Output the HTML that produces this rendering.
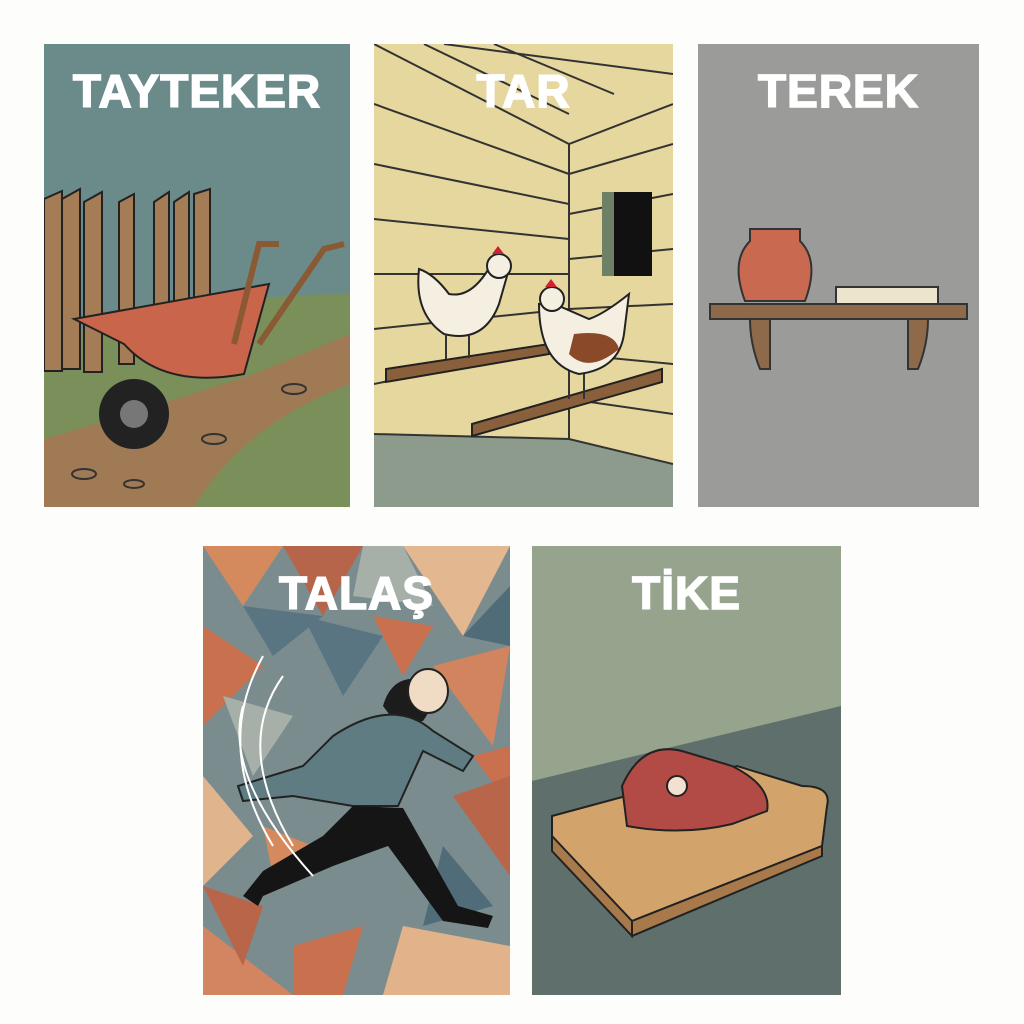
<!DOCTYPE html>
<html><head><meta charset="utf-8"><style>
body{margin:0;width:1024px;height:1024px;background:#fdfdfc;position:relative;overflow:hidden;font-family:"Liberation Sans","DejaVu Sans",sans-serif}
.c{position:absolute;overflow:hidden}
.t{position:absolute;left:0;right:0;text-align:center;color:#fff;font-weight:900;font-size:46px;letter-spacing:1px;-webkit-text-stroke:1.5px #fff}
svg{position:absolute;left:0;top:0}
</style></head><body>

<div class="c" style="left:44px;top:44px;width:306px;height:463px;background:#6b8a8a">
<svg width="306" height="463">
<path d="M0 300 Q150 250 306 250 L306 463 L0 463Z" fill="#7b8f5a"/>
<path d="M0 395 Q120 360 210 330 Q260 310 306 290 L306 340 Q200 380 150 463 L0 463Z" fill="#a07a55"/>
<g fill="#a47c55" stroke="#222" stroke-width="2">
<path d="M0 155 l18 -8 v180 h-18z"/><path d="M18 155 l18 -10 v180 h-18z"/><path d="M40 158 l18 -10 v180 h-18z"/><path d="M75 158 l15 -8 v170 h-15z"/><path d="M110 158 l15 -10 v150 h-15z"/><path d="M130 158 l15 -10 v140 h-15z"/><path d="M150 150 l16 -5 v150 h-16z"/>
</g>
<path d="M30 275 L225 240 L200 330 Q120 345 80 300Z" fill="#c8654a" stroke="#222" stroke-width="2"/>
<circle cx="90" cy="370" r="35" fill="#222"/><circle cx="90" cy="370" r="14" fill="#777"/>
<path d="M190 300 L215 200 L235 200 M215 300 L280 205 L300 200" stroke="#8a5a35" stroke-width="6" fill="none"/>
<g fill="none" stroke="#333" stroke-width="2"><ellipse cx="40" cy="430" rx="12" ry="5"/><ellipse cx="90" cy="440" rx="10" ry="4"/><ellipse cx="170" cy="395" rx="12" ry="5"/><ellipse cx="250" cy="345" rx="12" ry="5"/></g>
</svg>
<div class="t" style="top:20px">TAYTEKER</div></div>

<div class="c" style="left:374px;top:44px;width:299px;height:463px;background:#e6d79f">
<svg width="299" height="463">
<path d="M0 390 L195 395 L299 420 L299 463 L0 463Z" fill="#8d9b8c"/>
<g stroke="#333" stroke-width="2" fill="none">
<path d="M0 0 L195 100 L299 60 M195 100 V395 M0 390 L195 395 L299 420"/>
<path d="M0 60 L195 130 M0 120 L195 160 M0 175 L195 195 M0 230 L195 230 M0 285 L195 265 M0 340 L195 300 M195 130 L299 100 M195 170 L299 150 M195 215 L299 205 M195 265 L299 260 M195 310 L299 320 M195 355 L299 370 M50 0 L195 70 M120 0 L240 50 M70 0 L299 30"/>
</g>
<rect x="228" y="148" width="50" height="84" fill="#111"/><rect x="228" y="148" width="12" height="84" fill="#6e8066"/>
<path d="M12 325 L175 300 L175 310 L12 338Z" fill="#8a5f3c" stroke="#222" stroke-width="2"/>
<path d="M98 380 L288 325 L288 338 L98 392Z" fill="#8a5f3c" stroke="#222" stroke-width="2"/>
<path d="M45 225 Q40 270 70 290 Q110 300 125 260 L135 225 L120 215 Q100 255 75 250 Q60 230 45 225Z" fill="#f5efe2" stroke="#222" stroke-width="2"/>
<circle cx="125" cy="222" r="12" fill="#f5efe2" stroke="#222" stroke-width="2"/><path d="M118 210 l6 -8 l6 8z" fill="#c23"/>
<path d="M72 290 v25 M95 292 v22" stroke="#333" stroke-width="2"/>
<path d="M165 260 Q165 320 205 330 Q245 325 250 290 L255 250 Q230 270 215 275 L185 262Z" fill="#f5efe2" stroke="#222" stroke-width="2"/>
<path d="M200 290 Q240 285 245 305 Q215 330 195 310Z" fill="#8a4a2a"/>
<circle cx="178" cy="255" r="12" fill="#f5efe2" stroke="#222" stroke-width="2"/><path d="M171 243 l6 -8 l6 8z" fill="#c23"/>
<path d="M195 330 v25 M210 330 v25" stroke="#333" stroke-width="2"/>
</svg>
<div class="t" style="top:20px">TAR</div></div>

<div class="c" style="left:698px;top:44px;width:281px;height:463px;background:#9b9b99">
<svg width="281" height="463">
<rect x="12" y="260" width="257" height="15" fill="#8e6a4a" stroke="#333" stroke-width="2"/>
<path d="M52 275 h20 v50 h-10 q-10-25 -10-50z M210 275 h20 q0 25 -10 50 h-10z" fill="#8e6a4a" stroke="#333" stroke-width="2"/>
<path d="M52 185 h50 v12 q20 20 5 60 h-60 q-15 -40 5 -60z" fill="#c96a50" stroke="#333" stroke-width="2"/>
<rect x="138" y="243" width="102" height="17" fill="#ece4cd" stroke="#333" stroke-width="2"/>
</svg>
<div class="t" style="top:20px">TEREK</div></div>

<div class="c" style="left:203px;top:546px;width:307px;height:449px;background:#7a8c8e">
<svg width="307" height="449">
<g stroke="none">
<path d="M0 0 L80 0 L40 60Z" fill="#d58a5e"/><path d="M80 0 L160 0 L120 70Z" fill="#b7654a"/><path d="M200 0 L307 0 L260 90Z" fill="#e3b890"/>
<path d="M40 60 L120 70 L70 110Z" fill="#5a7582"/><path d="M160 0 L200 0 L230 60 L150 50Z" fill="#a7b0a8"/>
<path d="M0 80 L60 120 L0 180Z" fill="#c9704e"/><path d="M230 120 L307 100 L290 200Z" fill="#d2845e"/><path d="M0 230 L50 290 L0 340Z" fill="#e0b48c"/>
<path d="M260 90 L307 40 L307 100Z" fill="#4f6c78"/><path d="M270 210 L307 200 L307 260Z" fill="#c9704e"/>
<path d="M250 250 L307 230 L307 330Z" fill="#b9654a"/><path d="M0 380 L90 449 L0 449Z" fill="#d28560"/><path d="M200 380 L307 400 L307 449 L180 449Z" fill="#e2b38a"/>
<path d="M100 70 L180 90 L140 150Z" fill="#5a7582"/><path d="M20 150 L90 170 L50 230Z" fill="#a7b0a8"/><path d="M240 300 L290 360 L220 380Z" fill="#4f6c78"/>
<path d="M0 340 L60 360 L40 420Z" fill="#b9654a"/><path d="M90 400 L160 380 L140 449 L90 449Z" fill="#c9704e"/>
<path d="M170 70 L230 80 L200 130Z" fill="#c9704e"/><path d="M60 280 L110 300 L70 330Z" fill="#d58a5e"/>
</g>
<path d="M180 160 q10 -35 45 -25 q10 20 -5 40 l-25 5z" fill="#1c1c1c"/>
<ellipse cx="225" cy="145" rx="20" ry="22" fill="#f0dcc4" stroke="#222" stroke-width="2"/>
<path d="M130 190 Q190 150 230 185 L270 210 L260 225 L220 205 L195 260 L150 260 L90 250 L40 255 L35 240 L100 220Z" fill="#5f7c82" stroke="#222" stroke-width="2"/>
<path d="M150 260 L200 262 L255 360 L290 370 L285 382 L240 375 L185 300 L130 320 L60 350 L55 360 L40 350 L60 325 L120 290Z" fill="#151515"/>
<g fill="none" stroke="#fff" stroke-width="2"><path d="M60 110 Q10 200 70 300"/><path d="M80 130 Q30 200 90 300"/><path d="M40 160 Q20 230 110 330"/></g>
</svg>
<div class="t" style="top:20px">TALAŞ</div></div>

<div class="c" style="left:532px;top:546px;width:309px;height:449px;background:#96a38d">
<svg width="309" height="449">
<path d="M0 235 L309 160 L309 449 L0 449Z" fill="#5f6f6c"/>
<path d="M20 270 L205 220 L270 240 Q300 240 295 260 L290 300 L100 375 Q80 360 20 290Z" fill="#d2a46c" stroke="#222" stroke-width="2"/>
<path d="M20 290 L100 375 L100 390 L20 305Z M100 375 L290 300 L290 310 L100 390Z" fill="#a87a4b" stroke="#222" stroke-width="2"/>
<path d="M90 240 Q110 195 150 205 L200 220 Q240 240 235 265 L200 278 Q150 290 95 280Z" fill="#b24a45" stroke="#222" stroke-width="2"/>
<circle cx="145" cy="240" r="10" fill="#f2e0d0" stroke="#222" stroke-width="2"/>
</svg>
<div class="t" style="top:20px">TİKE</div></div>

</body></html>
